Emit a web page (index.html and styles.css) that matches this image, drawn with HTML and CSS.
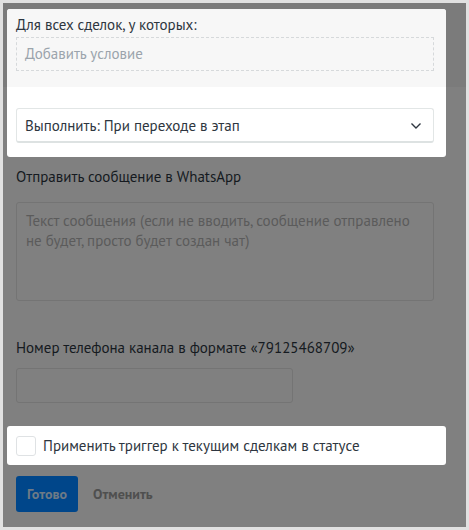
FILE: index.html
```html
<!DOCTYPE html>
<html lang="ru">
<head>
<meta charset="utf-8">
<link rel="stylesheet" href="styles.css">
</head>
<body>
<div class="screen">
  <div class="panel">
    <div class="panel-top">
      <div class="label">Для всех сделок, у которых:</div>
      <div class="dashed">Добавить условие</div>
    </div>
    <div class="panel-bottom">
      <div class="select">
        <span>Выполнить: При переходе в этап</span>
        <svg class="chev" width="12" height="8" viewBox="0 0 12 8"><path d="M1.5 1.5 L6 6 L10.5 1.5" fill="none" stroke="#2e3640" stroke-width="1.4"/></svg>
      </div>
    </div>
  </div>

  <div class="form">
    <div class="dim-label first">Отправить сообщение в WhatsApp</div>
    <div class="textarea">Текст сообщения (если не вводить, сообщение отправлено не будет, просто будет создан чат)</div>
    <div class="dim-label second">Номер телефона канала в формате «79125468709»</div>
    <div class="input"></div>
  </div>

  <div class="check-panel">
    <span class="checkbox"></span>
    <span class="check-text">Применить триггер к текущим сделкам в статусе</span>
  </div>

  <div class="actions">
    <span class="btn-primary">Готово</span>
    <span class="btn-link">Отменить</span>
  </div>
</div>
</body>
</html>
```

FILE: styles.css
```css
* { box-sizing: border-box; }
html, body { margin: 0; padding: 0; }
body {
  background: #e1e1e1;
  font-family: "PT Sans", Roboto, "Noto Sans", sans-serif;
  font-size: 15px;
  width: 469px;
  height: 530px;
  overflow: hidden;
}
.screen {
  margin: 3px 0 0 3px;
  width: 463px;
  height: 524px;
  background: linear-gradient(to bottom, #7b7b7b 0, #7b7b7b 84px, #808080 84px);
  padding: 6px 0 0 4px;
  display: flex;
  flex-direction: column;
}
.panel {
  width: 439px;
  border-radius: 3px;
  overflow: hidden;
  background: #fff;
}
.panel-top {
  background: #f7f7f7;
  padding: 7px 12px 16px 9px;
  height: 78px;
}
.label {
  line-height: 18px;
  color: #2e3640;
  height: 21px;
}
.dashed {
  height: 34px;
  border: 1px dashed #d6d9db;
  padding-left: 8px;
  line-height: 32px;
  color: #9ba4ac;
}
.panel-bottom {
  padding: 21px 12px 14px 9px;
  height: 70px;
}
.select {
  height: 35px;
  border: 1px solid #e2e6e6;
  border-bottom: 2px solid #dde2e2;
  border-radius: 3px;
  padding: 0 11px 0 8px;
  display: flex;
  align-items: center;
  justify-content: space-between;
  color: #2e3640;
}
.chev { display: block; margin-top: 1px; }
.form {
  padding-left: 9px;
  width: 427px;
}
.dim-label {
  line-height: 18px;
  color: #151a20;
}
.dim-label.first { margin-top: 11px; }
.textarea {
  margin-top: 16px;
  height: 99px;
  border: 1px solid #747474;
  border-radius: 3px;
  padding: 8px 9px;
  line-height: 20px;
  color: #5b5b5b;
}
.dim-label.second { margin-top: 38px; }
.input {
  margin-top: 11px;
  width: 277px;
  height: 35px;
  border: 1px solid #747474;
  border-radius: 3px;
}
.check-panel {
  margin-top: 23px;
  width: 439px;
  height: 39px;
  background: #fff;
  border-radius: 3px;
  padding: 0 9px;
  display: flex;
  align-items: center;
}
.checkbox {
  width: 20px;
  height: 20px;
  border: 1px solid #dfe2e4;
  border-radius: 3px;
  margin-right: 7px;
}
.check-text {
  color: #2e3640;
}
.actions {
  margin-top: 11px;
  padding-left: 9px;
  display: flex;
  align-items: center;
}
.btn-primary {
  width: 62px;
  height: 36px;
  background: #00468a;
  border-radius: 3px;
  color: #6e7a86;
  font-weight: bold;
  display: flex;
  align-items: center;
  justify-content: center;
  font-size: 14px;
}
.btn-link {
  margin-left: 15px;
  color: #4f4f4f;
  font-weight: bold;
  font-size: 14px;
}
```
